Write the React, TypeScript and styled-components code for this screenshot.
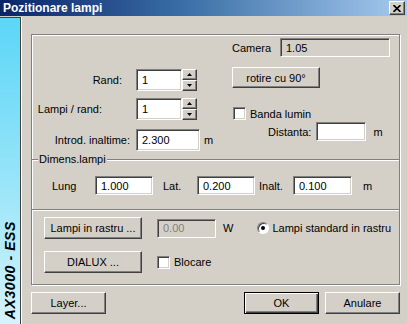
import React from "react";
import styled, { createGlobalStyle, css } from "styled-components";

const GlobalStyle = createGlobalStyle`
    html, body {
        margin: 0;
        padding: 0;
        background: #d4d0c8;
    }
    * {
        box-sizing: border-box;
    }
`;

const sunken = css`
    border: 1px solid;
    border-color: #808080 #ffffff #ffffff #808080;
    box-shadow: inset 1px 1px 0 #404040, inset -1px -1px 0 #d4d0c8;
`;

const raised = css`
    border: 1px solid;
    border-color: #ffffff #404040 #404040 #ffffff;
    box-shadow: inset -1px -1px 0 #808080, inset 1px 1px 0 #d4d0c8;
`;

const Window = styled.div`
    width: 407px;
    height: 324px;
    overflow: hidden;
    background: #d4d0c8;
    font-family: "Liberation Sans", Arial, sans-serif;
    font-size: 11px;
    color: #000;
    display: flex;
    flex-direction: column;
`;

const TitleBar = styled.div`
    height: 16px;
    flex-shrink: 0;
    display: flex;
    align-items: center;
    justify-content: space-between;
    padding: 0 2px 0 3px;
    background: linear-gradient(to right, #0a246a 0%, #3a6ea5 45%, #a6caf0 100%);
`;

const Title = styled.div`
    color: #fff;
    font-weight: bold;
    font-size: 12px;
`;

const CloseButton = styled.div`
    ${raised};
    width: 16px;
    height: 14px;
    background: #d4d0c8;
    display: flex;
    align-items: center;
    justify-content: center;
`;

const Body = styled.div`
    flex: 1;
    display: flex;
`;

const Strip = styled.div`
    width: 21px;
    flex-shrink: 0;
    margin-top: 1px;
    border-top: 1px solid #404040;
    border-right: 1px solid #404040;
    box-shadow: 1px 0 0 #ffffff;
    background: linear-gradient(to bottom, #5cd6f8 0%, #8ee2f8 45%, #d4f4fc 100%);
    display: flex;
    flex-direction: column;
    justify-content: flex-end;
    align-items: center;
    padding-bottom: 5px;
`;

const StripText = styled.div`
    writing-mode: vertical-rl;
    transform: rotate(180deg);
    font-weight: bold;
    font-style: italic;
    font-size: 14px;
    letter-spacing: 0.6px;
    white-space: nowrap;
`;

const Main = styled.div`
    flex: 1;
    display: flex;
    flex-direction: column;
    padding: 18px 7px 10px 10px;
`;

const Frame = styled.div`
    width: 369px;
    height: 251px;
    border: 1px solid #808080;
    box-shadow: inset 1px 1px 0 #ffffff, 1px 1px 0 #ffffff;
    display: flex;
    flex-direction: column;
`;

const Section = styled.div<{ $h: number; $line?: boolean }>`
    height: ${(p) => p.$h}px;
    flex-shrink: 0;
    ${(p) =>
        p.$line &&
        css`
            border-top: 1px solid #808080;
            box-shadow: inset 0 1px 0 #ffffff;
        `}
`;

const TopSection = styled(Section)`
    display: flex;
`;

const LeftCol = styled.div`
    width: 200px;
    padding-top: 34px;
    display: flex;
    flex-direction: column;
`;

const FieldRow = styled.div<{ $mt?: number }>`
    display: flex;
    align-items: center;
    height: 22px;
    margin-top: ${(p) => p.$mt || 0}px;
`;

const RowLabel = styled.div<{ $pr: number }>`
    width: 104px;
    text-align: right;
    padding-right: ${(p) => p.$pr}px;
    white-space: nowrap;
`;

const Input = styled.div<{ $w: number; $h?: number; $disabled?: boolean; $readonly?: boolean }>`
    ${sunken};
    width: ${(p) => p.$w}px;
    height: ${(p) => p.$h || 22}px;
    background: ${(p) => (p.$disabled || p.$readonly ? "#d4d0c8" : "#ffffff")};
    color: ${(p) => (p.$disabled ? "#808080" : "#000")};
    display: flex;
    align-items: center;
    padding-left: 5px;
    flex-shrink: 0;
`;

const Spinner = styled.div`
    display: flex;
    flex-direction: column;
    width: 15px;
    height: 22px;
`;

const SpinButton = styled.div`
    ${raised};
    background: #d4d0c8;
    flex: 1;
    display: flex;
    align-items: center;
    justify-content: center;
`;

const Unit = styled.span<{ $ml: number }>`
    margin-left: ${(p) => p.$ml}px;
`;

const RightCol = styled.div`
    padding-top: 3px;
    display: flex;
    flex-direction: column;
`;

const CameraRow = styled.div`
    display: flex;
    align-items: center;
    height: 19px;
`;

const CameraLabel = styled.div`
    width: 48px;
`;

const Button = styled.div<{ $w: number; $h?: number; $default?: boolean }>`
    width: ${(p) => p.$w}px;
    height: ${(p) => p.$h || 22}px;
    background: #d4d0c8;
    display: flex;
    align-items: center;
    justify-content: center;
    white-space: nowrap;
    flex-shrink: 0;
    ${(p) =>
        p.$default
            ? css`
                  border: 1px solid #000;
                  box-shadow: inset 1px 1px 0 #ffffff, inset -1px -1px 0 #404040, inset -2px -2px 0 #808080;
              `
            : raised}
`;

const CheckRow = styled.div<{ $mt?: number; $ml?: number }>`
    display: flex;
    align-items: center;
    gap: 4px;
    margin-top: ${(p) => p.$mt || 0}px;
    margin-left: ${(p) => p.$ml || 0}px;
    height: 13px;
`;

const CheckBox = styled.div`
    ${sunken};
    width: 13px;
    height: 13px;
    background: #fff;
    flex-shrink: 0;
`;

const Radio = styled.div`
    width: 12px;
    height: 12px;
    border-radius: 50%;
    border: 1px solid;
    border-color: #808080 #ffffff #ffffff #808080;
    box-shadow: inset 1px 1px 0 #404040;
    background: #fff;
    display: flex;
    align-items: center;
    justify-content: center;
    flex-shrink: 0;

    &::after {
        content: "";
        width: 4px;
        height: 4px;
        border-radius: 50%;
        background: #000;
    }
`;

const DistRow = styled.div`
    display: flex;
    align-items: center;
    height: 19px;
    margin-top: 2px;
    margin-left: 36px;
`;

const Legend = styled.div`
    margin: -7px 0 0 6px;
    padding: 0 1px;
    line-height: 13px;
    height: 13px;
    background: #d4d0c8;
    align-self: flex-start;
`;

const MidSection = styled(Section)`
    display: flex;
    flex-direction: column;
`;

const DimRow = styled.div`
    display: flex;
    align-items: center;
    margin-top: 10px;
    padding-left: 20px;
    height: 19px;
`;

const DimLabel = styled.div<{ $w: number; $ml?: number }>`
    width: ${(p) => p.$w}px;
    margin-left: ${(p) => p.$ml || 0}px;
    flex-shrink: 0;
`;

const BottomSection = styled(Section)`
    display: flex;
    flex-direction: column;
    padding: 7px 0 0 12px;
`;

const ActionRow = styled.div<{ $mt?: number }>`
    display: flex;
    align-items: center;
    height: 22px;
    margin-top: ${(p) => p.$mt || 0}px;
`;

const RadioLabel = styled.div`
    display: flex;
    align-items: center;
    gap: 3px;
    margin-left: 24px;
`;

const Footer = styled.div`
    display: flex;
    margin-top: 7px;
    height: 22px;
    width: 369px;
`;

const FooterRight = styled.div`
    margin-left: auto;
    display: flex;
    gap: 6px;
`;

const Arrow: React.FC<{ up?: boolean }> = ({ up }) => (
    <svg width="5" height="3" viewBox="0 0 5 3">
        <path d={up ? "M2.5 0 L5 3 L0 3 Z" : "M0 0 L5 0 L2.5 3 Z"} fill="#000" />
    </svg>
);

const SpinInput: React.FC<{ value: string }> = ({ value }) => (
    <>
        <Input $w={46}>{value}</Input>
        <Spinner>
            <SpinButton>
                <Arrow up />
            </SpinButton>
            <SpinButton>
                <Arrow />
            </SpinButton>
        </Spinner>
    </>
);

export default function App() {
    return (
        <Window>
            <GlobalStyle />
            <TitleBar>
                <Title>Pozitionare lampi</Title>
                <CloseButton>
                    <svg width="8" height="7" viewBox="0 0 8 7">
                        <path d="M0.5 0 L7.5 7 M7.5 0 L0.5 7" stroke="#000" strokeWidth="1.6" />
                    </svg>
                </CloseButton>
            </TitleBar>
            <Body>
                <Strip>
                    <StripText>AX3000 - ESS</StripText>
                </Strip>
                <Main>
                    <Frame>
                        <TopSection $h={124}>
                            <LeftCol>
                                <FieldRow>
                                    <RowLabel $pr={14}>Rand:</RowLabel>
                                    <SpinInput value="1" />
                                </FieldRow>
                                <FieldRow $mt={7}>
                                    <RowLabel $pr={34}>Lampi / rand:</RowLabel>
                                    <SpinInput value="1" />
                                </FieldRow>
                                <FieldRow $mt={9}>
                                    <RowLabel $pr={6}>Introd. inaltime:</RowLabel>
                                    <Input $w={64}>2.300</Input>
                                    <Unit $ml={4}>m</Unit>
                                </FieldRow>
                            </LeftCol>
                            <RightCol>
                                <CameraRow>
                                    <CameraLabel>Camera</CameraLabel>
                                    <Input $w={110} $h={19} $readonly>
                                        1.05
                                    </Input>
                                </CameraRow>
                                <Button $w={88} $h={21} style={{ marginTop: 10 }}>
                                    rotire cu 90°
                                </Button>
                                <CheckRow $mt={19} $ml={1}>
                                    <CheckBox />
                                    <span>Banda lumin</span>
                                </CheckRow>
                                <DistRow>
                                    <span>Distanta:</span>
                                    <Input $w={50} $h={19} style={{ marginLeft: 5 }} />
                                    <Unit $ml={7}>m</Unit>
                                </DistRow>
                            </RightCol>
                        </TopSection>
                        <MidSection $h={50} $line>
                            <Legend>Dimens.lampi</Legend>
                            <DimRow>
                                <DimLabel $w={43}>Lung</DimLabel>
                                <Input $w={58} $h={19}>1.000</Input>
                                <DimLabel $w={34} $ml={10}>
                                    Lat.
                                </DimLabel>
                                <Input $w={58} $h={19}>0.200</Input>
                                <DimLabel $w={34} $ml={4}>
                                    Inalt.
                                </DimLabel>
                                <Input $w={59} $h={19}>0.100</Input>
                                <Unit $ml={11}>m</Unit>
                            </DimRow>
                        </MidSection>
                        <BottomSection $h={75} $line>
                            <ActionRow>
                                <Button $w={98}>Lampi in rastru ...</Button>
                                <Input $w={59} $h={19} $disabled style={{ marginLeft: 15 }}>
                                    0.00
                                </Input>
                                <Unit $ml={7}>W</Unit>
                                <RadioLabel>
                                    <Radio />
                                    <span>Lampi standard in rastru</span>
                                </RadioLabel>
                            </ActionRow>
                            <ActionRow $mt={12}>
                                <Button $w={98}>DIALUX ...</Button>
                                <CheckRow $ml={15}>
                                    <CheckBox />
                                    <span>Blocare</span>
                                </CheckRow>
                            </ActionRow>
                        </BottomSection>
                    </Frame>
                    <Footer>
                        <Button $w={75}>Layer...</Button>
                        <FooterRight>
                            <Button $w={75} $default>
                                OK
                            </Button>
                            <Button $w={75}>Anulare</Button>
                        </FooterRight>
                    </Footer>
                </Main>
            </Body>
        </Window>
    );
}
